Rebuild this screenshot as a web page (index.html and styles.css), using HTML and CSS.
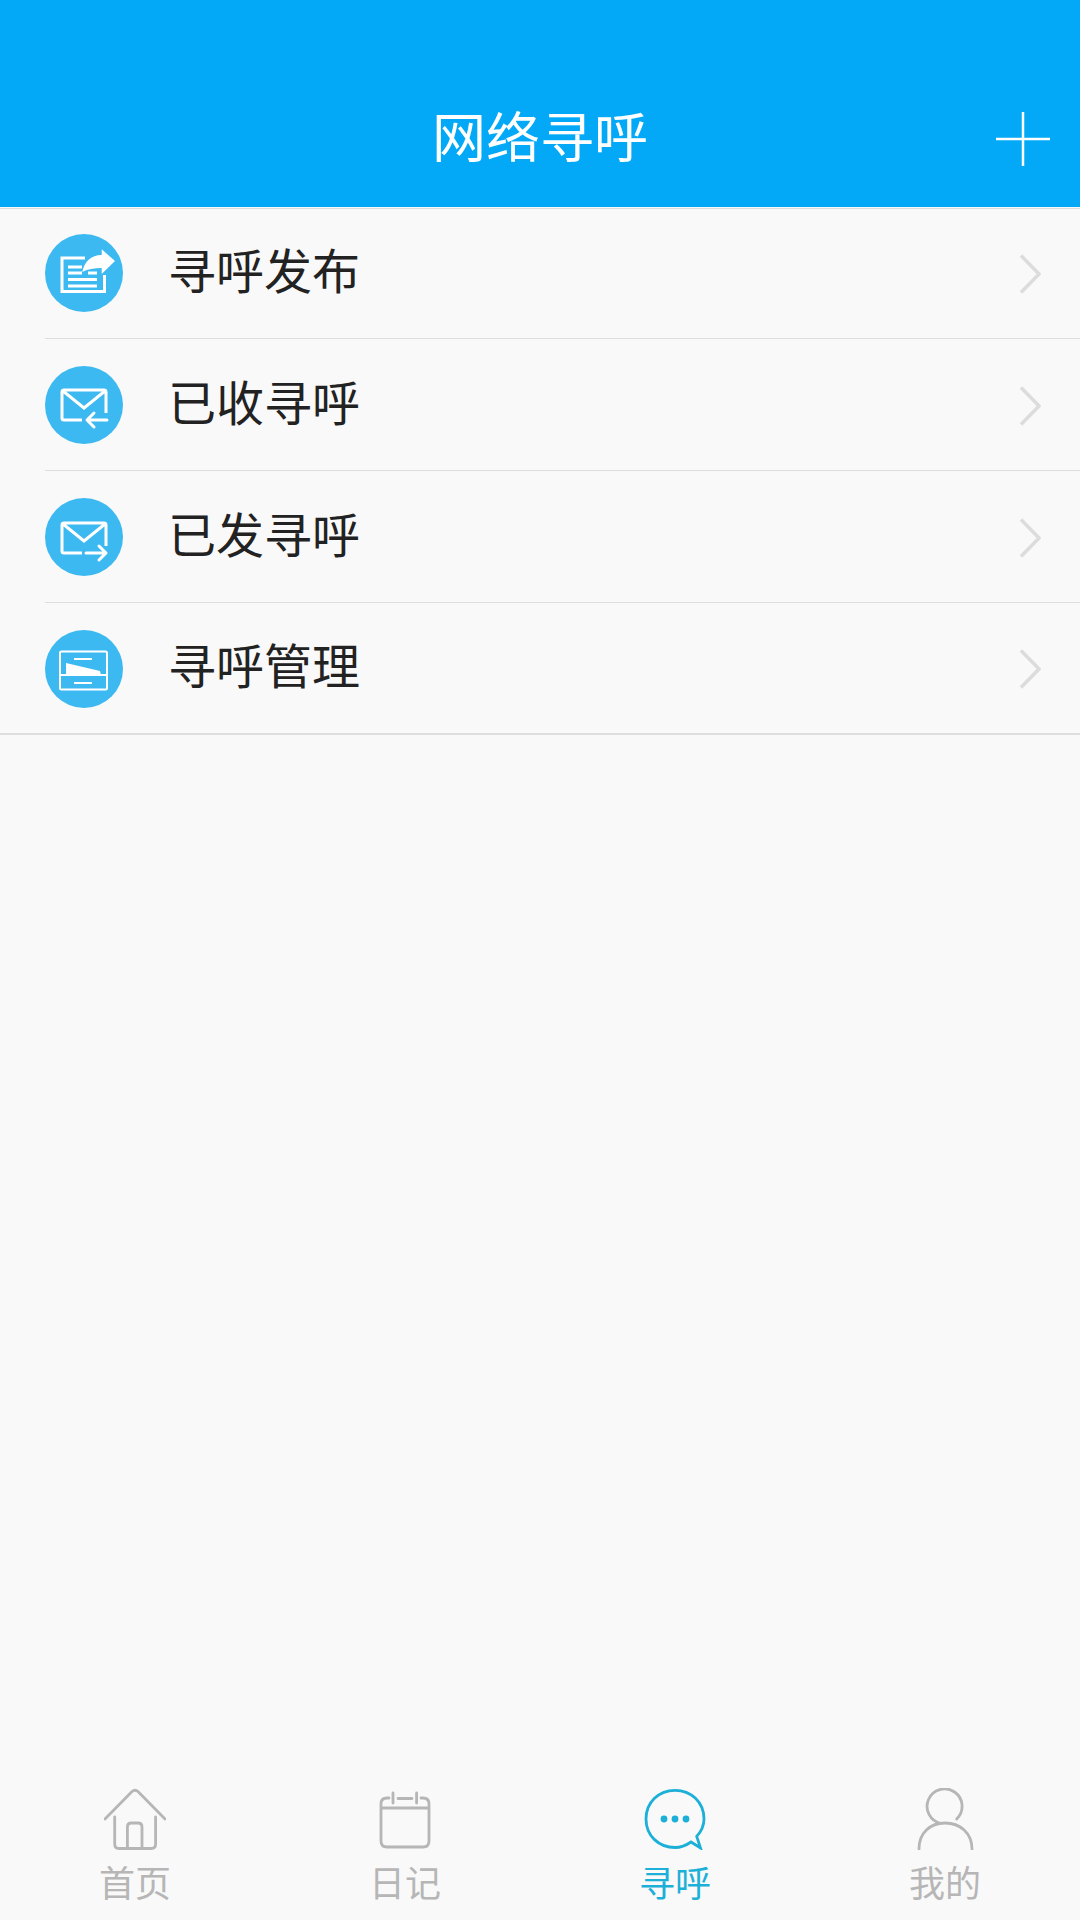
FILE: index.html
```html
<!DOCTYPE html>
<html lang="zh-CN">
  <head>
    <meta charset="UTF-8" />
    <meta name="viewport" content="width=device-width, initial-scale=1.0" />
    <title>网络寻呼</title>
    <link rel="stylesheet" href="styles.css">
  </head>
  <body>
    <header class="topbar">
      <h1>网络寻呼</h1>
      <svg class="add" viewBox="0 0 54 54">
        <path d="M0 27H54M27 0V54" />
      </svg>
    </header>

    <main class="menu">
      <div class="item">
        <svg class="badge" viewBox="0 0 78 78">
          <circle class="disc" cx="39" cy="39" r="39" />
          <path class="line" d="M40 24H17V57.500H59.500V41" />
          <path class="line" d="M23 33H37M23 39H37M43 39H52M23 45.500H52M23 52H52" />
          <path class="fill" d="M56.700 15.300L70 27L56.700 40V34C49 34 43 35 37.300 38C39 28 46 21 56.700 21Z" />
        </svg>
        <span>寻呼发布</span>
        <svg class="chevron" viewBox="0 0 22 40"><path d="M2 1.500L20 20L2 38.500" /></svg>
      </div>

      <div class="item">
        <svg class="badge" viewBox="0 0 78 78">
          <circle class="disc" cx="39" cy="39" r="39" />
          <path class="line" d="M37 54H19Q17 54 17 52V26Q17 24 19 24H59Q61 24 61 26V47M18 25L39 42L60 25" />
          <path class="line round" d="M62 54H43M49 47L42 54L49 61" />
        </svg>
        <span>已收寻呼</span>
        <svg class="chevron" viewBox="0 0 22 40"><path d="M2 1.500L20 20L2 38.500" /></svg>
      </div>

      <div class="item">
        <svg class="badge" viewBox="0 0 78 78">
          <circle class="disc" cx="39" cy="39" r="39" />
          <path class="line" d="M37 55H19Q17 55 17 53V27Q17 25 19 25H59Q61 25 61 27V48M18 26L39 43L60 26" />
          <path class="line round" d="M41 55H61M54 48L61 55L54 62" />
        </svg>
        <span>已发寻呼</span>
        <svg class="chevron" viewBox="0 0 22 40"><path d="M2 1.500L20 20L2 38.500" /></svg>
      </div>

      <div class="item last">
        <svg class="badge" viewBox="0 0 78 78">
          <circle class="disc" cx="39" cy="39" r="39" />
          <rect class="line thin" x="15" y="21.500" width="47" height="38" rx="1.500" />
          <path class="line thin" d="M15 45H62M29 29H47M29 53H47" />
          <path class="fill" d="M21 33L55 41L56 45H21Z" />
        </svg>
        <span>寻呼管理</span>
        <svg class="chevron" viewBox="0 0 22 40"><path d="M2 1.500L20 20L2 38.500" /></svg>
      </div>
    </main>

    <nav class="tabs">
      <div class="tab">
        <svg viewBox="0 0 62 62">
          <path d="M1 31L28 3.500Q31 1 34 3.500L61 31M10.700 29V56Q10.700 60.500 15 60.500H47Q51.600 60.500 51.600 56V29M23.400 60V39Q23.400 35 27.400 35H34Q38 35 38 39V60" />
        </svg>
        <span>首页</span>
      </div>
      <div class="tab">
        <svg viewBox="0 0 62 62">
          <path d="M15 10H13Q7 10 7 16V53Q7 59 13 59H49Q55 59 55 53V16Q55 10 49 10H47M7 20H55M19 5V15M42.600 5V15M24 10.500H38" />
        </svg>
        <span>日记</span>
      </div>
      <div class="tab active">
        <svg viewBox="0 0 62 62">
          <path d="M52.700 48.400C57.600 43 60 37 60 31C60 14 47 2.300 31 2.300C15 2.300 2 14 2 31C2 48 15 59.500 31 59.500C37 59.500 42 57.500 47 54L56.500 60Z" />
          <circle cx="20" cy="31" r="3.400" />
          <circle cx="31" cy="31" r="3.400" />
          <circle cx="42" cy="31" r="3.400" />
        </svg>
        <span>寻呼</span>
      </div>
      <div class="tab">
        <svg viewBox="0 0 62 62">
          <path d="M42.700 31A17.500 17.500 0 1 0 27 35.500M5 61C5 45 16 35 31 35C46 35 58 45 58 61" />
        </svg>
        <span>我的</span>
      </div>
    </nav>
  </body>
</html>
```

FILE: styles.css
```css
/* Reset básico */
* {
  margin: 0;
  padding: 0;
  box-sizing: border-box;
  font-family: "Noto Sans CJK SC", "Noto Sans", sans-serif;
}

body {
  background-color: #f9f9f9;
  display: flex;
  flex-direction: column;
  height: 100vh;
}

/* Barra superior */
.topbar {
  background-color: #03a9f6;
  height: 207px;
  padding: 67px 30px 0;
  display: grid;
  grid-template-columns: 1fr auto 1fr;
  align-items: center;
}

.topbar h1 {
  grid-column: 2;
  font-size: 54px;
  font-weight: 400;
  line-height: 136px;
  padding-bottom: 4px;
  color: #fff;
}

.add {
  grid-column: 3;
  justify-self: end;
  width: 54px;
  height: 54px;
  margin-top: 4px;
}

.add path {
  fill: none;
  stroke: #fff;
  stroke-width: 2.500;
}

/* Lista */
.menu {
  margin-top: 1px;
  border-top: 1px solid #dcdcdc;
}

.item {
  height: 132px;
  margin-left: 45px;
  padding-right: 39px;
  border-bottom: 1px solid #dedede;
  display: flex;
  align-items: center;
  font-size: 48px;
  color: #222;
}

.item:first-child {
  height: 130px;
  padding-bottom: 2px;
}

.item.last {
  margin-left: 0;
  padding-left: 45px;
  border-bottom: 2px solid #dedede;
}

.item span {
  margin-left: 45px;
  flex: 1;
  line-height: 60px;
  padding-bottom: 10px;
}

.badge {
  width: 78px;
  height: 78px;
  margin-top: 1px;
}

.disc {
  fill: #3cb9f0;
}

.line {
  fill: none;
  stroke: #fff;
  stroke-width: 3;
}

.line.thin {
  stroke-width: 2;
}

.line.round {
  stroke-linecap: round;
  stroke-linejoin: round;
}

.fill {
  fill: #fff;
}

.chevron {
  width: 22px;
  height: 40px;
  margin-top: 2px;
}

.chevron path {
  fill: none;
  stroke: #dcdcdc;
  stroke-width: 3.500;
}

/* Abas */
.tabs {
  margin-top: auto;
  padding-bottom: 17px;
  display: grid;
  grid-template-columns: repeat(4, 1fr);
}

.tab {
  display: flex;
  flex-direction: column;
  align-items: center;
  font-size: 36px;
  color: #b6b6b6;
}

.tab svg {
  width: 62px;
  height: 62px;
  margin-bottom: 9px;
}

.tab svg path {
  fill: none;
  stroke: #b6b6b6;
  stroke-width: 2.800;
  stroke-linecap: round;
}

.tab span {
  line-height: 44px;
}

.tab.active {
  color: #1cb0d8;
}

.tab.active svg path {
  stroke: #1cb0d8;
}

.tab.active svg circle {
  fill: #1cb0d8;
}
```
